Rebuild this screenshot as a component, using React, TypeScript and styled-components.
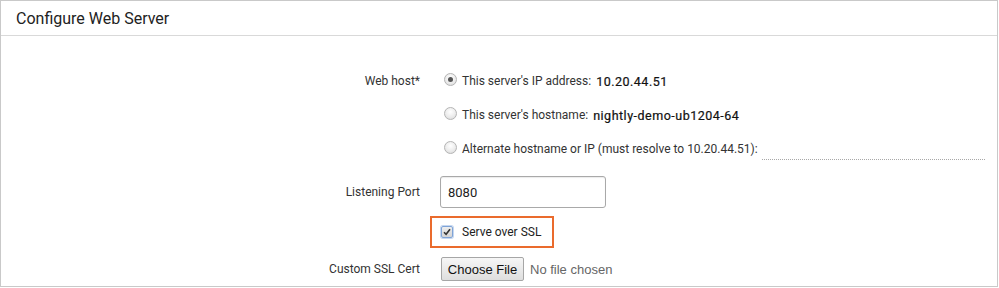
import React from 'react';
import styled, { createGlobalStyle } from 'styled-components';

const GlobalStyle = createGlobalStyle`
  html, body {
    margin: 0;
    padding: 0;
    background: #ffffff;
  }
  body {
    font-family: Roboto, 'Liberation Sans', Arial, sans-serif;
    color: #333;
  }
`;

const Panel = styled.section`
  box-sizing: border-box;
  width: 998px;
  height: 287px;
  border: 1px solid #c9c9c9;
  background: #fff;
  overflow: hidden;
`;

const Header = styled.header`
  height: 34px;
  display: flex;
  align-items: center;
  padding-left: 15px;
  border-bottom: 1px solid #d9d9d9;
  font-size: 16px;
  color: #222;
`;

const Form = styled.div`
  display: grid;
  grid-template-columns: 419px 1fr;
  column-gap: 10px;
  padding-top: 28px;
`;

const Label = styled.div<{ $height: number; $top?: number }>`
  height: ${p => p.$height}px;
  margin-top: ${p => p.$top ?? 0}px;
  display: flex;
  align-items: center;
  justify-content: flex-end;
  font-size: 12px;
  color: #333;
`;

const Control = styled.div<{ $top?: number }>`
  margin-top: ${p => p.$top ?? 0}px;
  display: flex;
  flex-direction: column;
`;

const RadioRow = styled.label`
  height: 34px;
  display: flex;
  align-items: center;
  padding-left: 14px;
  font-size: 12px;
  color: #333;
`;

const RadioDot = styled.span<{ $checked?: boolean }>`
  box-sizing: border-box;
  width: 13px;
  height: 13px;
  margin-right: 5px;
  margin-top: -3px;
  border-radius: 50%;
  border: 1px solid #b4b4b4;
  background: radial-gradient(circle at 50% 35%, #ffffff 0%, #ececec 55%, #d6d6d6 100%);
  display: flex;
  align-items: center;
  justify-content: center;
  flex-shrink: 0;
  &::after {
    content: '';
    display: ${p => (p.$checked ? 'block' : 'none')};
    width: 5px;
    height: 5px;
    border-radius: 50%;
    background: #555;
  }
`;

const Value = styled.span`
  font-size: 12.5px;
  letter-spacing: 0.5px;
  color: #111;
  margin-left: 5px;
  -webkit-text-stroke: 0.2px #111;
`;

const DottedInput = styled.span`
  width: 223px;
  height: 14px;
  margin-left: 4px;
  margin-top: 6px;
  border-bottom: 1px dotted #a8a8a8;
`;

const TextInput = styled.div`
  box-sizing: border-box;
  width: 166px;
  height: 32px;
  margin-left: 10px;
  border: 1px solid #a9a9a9;
  border-radius: 3px;
  box-shadow: inset 0 1px 1px rgba(0, 0, 0, 0.08);
  display: flex;
  align-items: center;
  padding-left: 7px;
  font-size: 13px;
  color: #222;
`;

const Highlight = styled.label`
  box-sizing: border-box;
  width: 124px;
  height: 32px;
  border: 2px solid #ea6b2d;
  display: flex;
  align-items: center;
  padding-left: 9px;
  font-size: 12px;
  color: #222;
`;

const CheckBox = styled.span`
  box-sizing: border-box;
  width: 12px;
  height: 12px;
  margin-right: 9px;
  border: 1px solid #7fa3d6;
  border-radius: 2px;
  background: linear-gradient(#eeeeee, #d4d4d4);
  box-shadow: 0 0 0 1px #c5d7f0;
  display: flex;
  align-items: center;
  justify-content: center;
`;

const FileRow = styled.div`
  display: flex;
  align-items: center;
  padding-left: 11px;
  font-family: 'Liberation Sans', Arial, sans-serif;
  font-size: 13px;
`;

const FileButton = styled.span`
  box-sizing: border-box;
  width: 83px;
  height: 24px;
  border: 1px solid #a6a6a6;
  border-radius: 2px;
  background: linear-gradient(#f6f6f6, #dedede);
  display: flex;
  align-items: center;
  justify-content: center;
  color: #111;
`;

const FileName = styled.span`
  margin-left: 6px;
  color: #666;
`;

const hosts = [
  { text: "This server's IP address:", value: '10.20.44.51', checked: true },
  { text: "This server's hostname:", value: 'nightly-demo-ub1204-64' },
];

export default function App() {
  return (
    <>
      <GlobalStyle />
      <Panel>
        <Header>Configure Web Server</Header>
        <Form>
          <Label $height={34}>Web host*</Label>
          <Control>
            {hosts.map(h => (
              <RadioRow key={h.value}>
                <RadioDot $checked={h.checked} />
                {h.text}
                <Value>{h.value}</Value>
              </RadioRow>
            ))}
            <RadioRow>
              <RadioDot />
              Alternate hostname or IP (must resolve to 10.20.44.51):
              <DottedInput />
            </RadioRow>
          </Control>

          <Label $height={32} $top={10} style={{ gridColumn: 1 }}>
            Listening Port
          </Label>
          <Control $top={10}>
            <TextInput>8080</TextInput>
          </Control>

          <div />
          <Control $top={8}>
            <Highlight>
              <CheckBox>
                <svg width="8" height="8" viewBox="0 0 8 8">
                  <path d="M1 4.2 L3.1 6.3 L7 1.2" stroke="#333" strokeWidth="1.6" fill="none" />
                </svg>
              </CheckBox>
              Serve over SSL
            </Highlight>
          </Control>

          <Label $height={24} $top={9}>
            Custom SSL Cert
          </Label>
          <Control $top={9}>
            <FileRow>
              <FileButton>Choose File</FileButton>
              <FileName>No file chosen</FileName>
            </FileRow>
          </Control>
        </Form>
      </Panel>
    </>
  );
}
